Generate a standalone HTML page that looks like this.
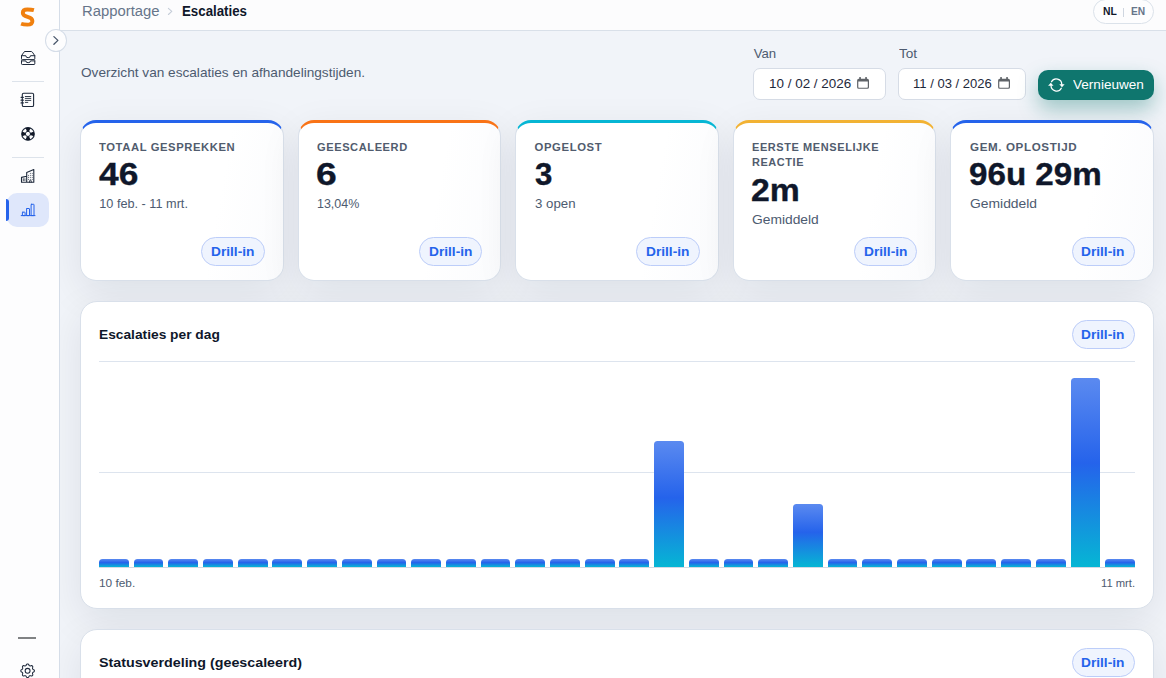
<!DOCTYPE html>
<html lang="nl">
<head>
<meta charset="utf-8">
<title>Escalaties</title>
<style>
*{box-sizing:border-box;margin:0;padding:0}
html,body{width:1166px;height:678px;overflow:hidden}
body{font-family:"Liberation Sans",sans-serif;color:#0f172a;background:#eef1f6;position:relative}
.t{position:absolute;white-space:nowrap;line-height:1;transform-origin:0 0;display:block}
#main{position:absolute;left:60px;top:31px;width:1106px;height:647px;background:#f1f4f9}
#side{position:absolute;left:0;top:0;width:60px;height:678px;background:#fdfdfe;border-right:1px solid #d5dde8}
.sep{position:absolute;left:12px;width:32px;height:1px;background:#dde3eb}
#active{position:absolute;left:7px;top:193px;width:42px;height:34px;border-radius:10px;background:#dfe7fb}
#activebar{position:absolute;left:6px;top:199px;width:3px;height:22px;border-radius:0 3px 3px 0;background:#2563eb}
#dash{position:absolute;left:18px;top:637px;width:18px;height:2px;background:#808284}
#toggle{position:absolute;left:45px;top:29px;width:22px;height:23px;border-radius:50%;background:#fdfdfe;border:1px solid #d5dde8}
#head{position:absolute;left:60px;top:0;width:1106px;height:31px;background:#fcfcfd;border-bottom:1px solid #d9e0e9}
#lang{position:absolute;left:1093px;top:-1px;width:61px;height:25px;border-radius:13px;border:1px solid #dbe2ea;background:#fdfdfe}
#langsep{position:absolute;left:1123px;top:8px;width:1px;height:9px;background:#cfd6e0}
.inp{position:absolute;top:68px;height:32px;border:1px solid #d6dce6;border-radius:7px;background:#fff}
#btn{position:absolute;left:1038px;top:70px;width:116px;height:30px;border-radius:10px;background:#0f766e;box-shadow:0 9px 20px rgba(15,118,110,.36)}
.card{position:absolute;top:120px;height:161px;width:203.6px;border-radius:16px;background:linear-gradient(100deg,#fff 0,#fff 66%,#fafbfd 100%);border:1px solid #d9e0ea;border-top:3px solid #2563eb;box-shadow:0 12px 40px rgba(15,23,42,.085)}
.pill{position:absolute;width:63.4px;height:29px;border-radius:15px;border:1px solid #bccdf9;background:#eff4fe}
.panel{position:absolute;left:80px;width:1074px;border-radius:17px;background:#fff;border:1px solid #d9e0ea;box-shadow:0 12px 40px rgba(15,23,42,.085)}
.grid{position:absolute;left:99px;width:1036px;height:1px;background:#dde4ee}
.bar{position:absolute;width:29.9px;border-radius:3.5px 3.5px 0 0;background:linear-gradient(180deg,#5b8af0 0%,#2563eb 45%,#06b6d4 100%)}
svg{position:absolute;left:0;top:0;overflow:visible}
</style>
</head>
<body>
<div id="main"></div>
<div id="head"></div>
<div id="lang"></div><div id="langsep"></div>
<div class="inp" style="left:753.3px;width:133px"></div>
<div class="inp" style="left:898.4px;width:127.2px"></div>
<div id="btn"></div>
<div class="card" style="left:80.0px;border-top-color:#2563eb"></div>
<div class="pill" style="left:201.3px;top:237px"></div>
<div class="card" style="left:297.6px;border-top-color:#f97316"></div>
<div class="pill" style="left:418.9px;top:237px"></div>
<div class="card" style="left:515.1px;border-top-color:#06b6d4"></div>
<div class="pill" style="left:636.4px;top:237px"></div>
<div class="card" style="left:732.7px;border-top-color:#f2b233"></div>
<div class="pill" style="left:854.0px;top:237px"></div>
<div class="card" style="left:950.2px;border-top-color:#2563eb"></div>
<div class="pill" style="left:1071.5px;top:237px"></div>
<div class="panel" style="top:301px;height:308px"></div>
<div class="panel" style="top:629px;height:120px"></div>
<div class="pill" style="left:1072px;top:319.9px;width:62.8px"></div>
<div class="pill" style="left:1072px;top:648.1px;width:62.8px"></div>
<div class="grid" style="top:361px"></div>
<div class="grid" style="top:472px"></div>
<div class="bar s" style="left:98.9px;top:558.9px;height:8.3px"></div>
<div class="bar s" style="left:133.6px;top:558.9px;height:8.3px"></div>
<div class="bar s" style="left:168.3px;top:558.9px;height:8.3px"></div>
<div class="bar s" style="left:203.0px;top:558.9px;height:8.3px"></div>
<div class="bar s" style="left:237.7px;top:558.9px;height:8.3px"></div>
<div class="bar s" style="left:272.4px;top:558.9px;height:8.3px"></div>
<div class="bar s" style="left:307.1px;top:558.9px;height:8.3px"></div>
<div class="bar s" style="left:341.8px;top:558.9px;height:8.3px"></div>
<div class="bar s" style="left:376.5px;top:558.9px;height:8.3px"></div>
<div class="bar s" style="left:411.2px;top:558.9px;height:8.3px"></div>
<div class="bar s" style="left:445.9px;top:558.9px;height:8.3px"></div>
<div class="bar s" style="left:480.6px;top:558.9px;height:8.3px"></div>
<div class="bar s" style="left:515.3px;top:558.9px;height:8.3px"></div>
<div class="bar s" style="left:550.0px;top:558.9px;height:8.3px"></div>
<div class="bar s" style="left:584.7px;top:558.9px;height:8.3px"></div>
<div class="bar s" style="left:619.4px;top:558.9px;height:8.3px"></div>
<div class="bar" style="left:654.1px;top:441.2px;height:126.0px"></div>
<div class="bar s" style="left:688.8px;top:558.9px;height:8.3px"></div>
<div class="bar s" style="left:723.5px;top:558.9px;height:8.3px"></div>
<div class="bar s" style="left:758.2px;top:558.9px;height:8.3px"></div>
<div class="bar" style="left:792.9px;top:504.2px;height:63.0px"></div>
<div class="bar s" style="left:827.6px;top:558.9px;height:8.3px"></div>
<div class="bar s" style="left:862.3px;top:558.9px;height:8.3px"></div>
<div class="bar s" style="left:897.0px;top:558.9px;height:8.3px"></div>
<div class="bar s" style="left:931.7px;top:558.9px;height:8.3px"></div>
<div class="bar s" style="left:966.4px;top:558.9px;height:8.3px"></div>
<div class="bar s" style="left:1001.1px;top:558.9px;height:8.3px"></div>
<div class="bar s" style="left:1035.8px;top:558.9px;height:8.3px"></div>
<div class="bar" style="left:1070.5px;top:378.2px;height:189.0px"></div>
<div class="bar s" style="left:1105.2px;top:558.9px;height:8.3px"></div>
<div class="grid" style="top:567px;background:#d3dae4"></div>
<div id="side"></div>
<div class="sep" style="top:81px"></div>
<div class="sep" style="top:157px"></div>
<div id="active"></div><div id="activebar"></div>
<div id="dash"></div>
<div id="toggle"></div>
<span class="t" style="left:81.9px;top:4px;font-size:14px;color:#66758a;transform:scaleX(1.060)">Rapportage</span>
<span class="t" style="left:181.5px;top:4px;font-size:14px;color:#0f172a;font-weight:700;transform:scaleX(0.949)">Escalaties</span>
<span class="t" style="left:1102.9px;top:7px;font-size:10.2px;color:#0f172a;font-weight:700;transform:scaleX(1.018)">NL</span>
<span class="t" style="left:1130.9px;top:7px;font-size:10.2px;color:#66758a;font-weight:700">EN</span>
<span class="t" style="left:80.8px;top:66px;font-size:13px;color:#4d5b70;transform:scaleX(1.048)">Overzicht van escalaties en afhandelingstijden.</span>
<span class="t" style="left:753.7px;top:47px;font-size:13.2px;color:#4d5b70">Van</span>
<span class="t" style="left:898.5px;top:47px;font-size:13.2px;color:#4d5b70;transform:scaleX(1.032)">Tot</span>
<span class="t" style="left:768.9px;top:77px;font-size:13.2px;color:#1e293b;transform:scaleX(1.020)">10 / 02 / 2026</span>
<span class="t" style="left:913.4px;top:77px;font-size:13.2px;color:#1e293b;transform:scaleX(0.988)">11 / 03 / 2026</span>
<span class="t" style="left:1072.8px;top:78px;font-size:13px;color:#ffffff;transform:scaleX(1.043)">Vernieuwen</span>
<span class="t" style="left:99.3px;top:142px;font-size:11.3px;color:#515c6e;font-weight:700;letter-spacing:0.6px;transform:scaleX(0.995)">TOTAAL GESPREKKEN</span>
<span class="t" style="left:99.3px;top:159px;font-size:31px;color:#0f172a;font-weight:700;transform:scaleX(1.139);-webkit-text-stroke:.35px #0f172a">46</span>
<span class="t" style="left:99.3px;top:198px;font-size:12.7px;color:#4d5b70">10 feb. - 11 mrt.</span>
<span class="t" style="left:211.1px;top:246px;font-size:12.4px;color:#2563eb;font-weight:700;transform:scaleX(1.107)">Drill-in</span>
<span class="t" style="left:316.9px;top:142px;font-size:11.3px;color:#515c6e;font-weight:700;letter-spacing:0.6px;transform:scaleX(0.980)">GEESCALEERD</span>
<span class="t" style="left:315.8px;top:159px;font-size:31px;color:#0f172a;font-weight:700;transform:scaleX(1.200);-webkit-text-stroke:.35px #0f172a">6</span>
<span class="t" style="left:316.9px;top:198px;font-size:12.7px;color:#4d5b70;transform:scaleX(0.982)">13,04%</span>
<span class="t" style="left:428.7px;top:246px;font-size:12.4px;color:#2563eb;font-weight:700;transform:scaleX(1.107)">Drill-in</span>
<span class="t" style="left:534.6px;top:142px;font-size:11.3px;color:#515c6e;font-weight:700;letter-spacing:0.6px">OPGELOST</span>
<span class="t" style="left:534.6px;top:159px;font-size:31px;color:#0f172a;font-weight:700;transform:scaleX(1.006);-webkit-text-stroke:.35px #0f172a">3</span>
<span class="t" style="left:534.6px;top:198px;font-size:12.7px;color:#4d5b70;transform:scaleX(1.045)">3 open</span>
<span class="t" style="left:646.2px;top:246px;font-size:12.4px;color:#2563eb;font-weight:700;transform:scaleX(1.107)">Drill-in</span>
<span class="t" style="left:752.2px;top:142px;font-size:11.3px;color:#515c6e;font-weight:700;letter-spacing:0.6px;transform:scaleX(0.973)">EERSTE MENSELIJKE</span>
<span class="t" style="left:752.2px;top:157px;font-size:11.3px;color:#515c6e;font-weight:700;letter-spacing:0.6px;transform:scaleX(0.969)">REACTIE</span>
<span class="t" style="left:751.2px;top:175px;font-size:31px;color:#0f172a;font-weight:700;transform:scaleX(1.089);-webkit-text-stroke:.35px #0f172a">2m</span>
<span class="t" style="left:752.2px;top:214px;font-size:12.7px;color:#4d5b70;transform:scaleX(1.088)">Gemiddeld</span>
<span class="t" style="left:863.8px;top:246px;font-size:12.4px;color:#2563eb;font-weight:700;transform:scaleX(1.107)">Drill-in</span>
<span class="t" style="left:969.9px;top:142px;font-size:11.3px;color:#515c6e;font-weight:700;letter-spacing:0.6px;transform:scaleX(1.027)">GEM. OPLOSTIJD</span>
<span class="t" style="left:968.8px;top:159px;font-size:31px;color:#0f172a;font-weight:700;transform:scaleX(1.070);-webkit-text-stroke:.35px #0f172a">96u 29m</span>
<span class="t" style="left:969.9px;top:198px;font-size:12.7px;color:#4d5b70;transform:scaleX(1.093)">Gemiddeld</span>
<span class="t" style="left:1081.3px;top:246px;font-size:12.4px;color:#2563eb;font-weight:700;transform:scaleX(1.107)">Drill-in</span>
<span class="t" style="left:99.3px;top:328px;font-size:13.2px;color:#0f172a;font-weight:700;transform:scaleX(1.043)">Escalaties per dag</span>
<span class="t" style="left:1081.3px;top:329px;font-size:12.4px;color:#2563eb;font-weight:700;transform:scaleX(1.107)">Drill-in</span>
<span class="t" style="left:99.3px;top:578px;font-size:11.5px;color:#4d5b70;transform:scaleX(1.029)">10 feb.</span>
<span class="t" style="left:1100.9px;top:578px;font-size:11.5px;color:#4d5b70;transform:scaleX(0.976)">11 mrt.</span>
<span class="t" style="left:99.4px;top:656px;font-size:13.2px;color:#0f172a;font-weight:700;transform:scaleX(1.082)">Statusverdeling (geescaleerd)</span>
<span class="t" style="left:1081.3px;top:657px;font-size:12.4px;color:#2563eb;font-weight:700;transform:scaleX(1.107)">Drill-in</span>
<svg width="1166" height="678" viewBox="0 0 1166 678" fill="none" stroke-linecap="round" stroke-linejoin="round">
<!-- logo S -->
<path d="M33.9 10.1 C31.8 9.5 29.6 9.5 27.4 9.5 C24.3 9.5 22.8 10.9 22.8 12.9 C22.8 15.2 24.8 16 27.6 16.8 C30.6 17.6 32.4 18.6 32.4 20.9 C32.4 23.3 30.4 24.6 27.4 24.6 C25.2 24.6 23.2 24.5 21.1 23.7" stroke="#f0800f" stroke-width="3.9" stroke-linecap="butt"/>
<!-- toggle chevron + breadcrumb chevron -->
<path d="M53.9 36.6 L57.9 40.4 L53.9 44.2" stroke="#475569" stroke-width="1.3"/>
<path d="M168.4 8.3 L171.8 11.4 L168.4 14.5" stroke="#c5cdd8" stroke-width="1.1"/>
<!-- tray stack -->
<g stroke="#1e293b" stroke-width="1.1">
<path d="M25.2 51.5 H31.1 Q31.9 51.5 32.4 52.2 L34.8 55.7 V58.8 Q34.8 59.6 34 59.6 H22.3 Q21.5 59.6 21.5 58.8 V55.7 L23.9 52.2 Q24.4 51.5 25.2 51.5 Z" stroke-width="1"/>
<path d="M21.5 55.7 H25.8 A2.35 2 0 0 0 30.5 55.7 H34.8" stroke-width="1"/>
<path d="M21.5 60.9 V63.8 Q21.5 64.5 22.3 64.5 H34 Q34.8 64.5 34.8 63.8 V60.9" stroke-width="1"/>
<path d="M21.5 60.9 H25.8 A2.35 1.8 0 0 0 30.5 60.9 H34.8" stroke-width="1"/>
<!-- notebook -->
<rect x="22.3" y="93.2" width="11.3" height="13.3" rx="1.3"/>
<path d="M21.1 97.3 H23.3 M21.1 100.2 H23.3 M21.1 102.9 H23.3" stroke-width="1.3"/>
<path d="M25.3 96.5 H30.8 M25.3 98.4 H30.8 M25.3 100.4 H30.8 M25.3 102.4 H27.8" stroke-width=".9"/>
<!-- business -->
<path d="M26.7 182.3 V172.4 L33.8 169.5 V182.3 M21.5 182.3 V177.4 L26.7 176.3 M21.5 182.3 H33.8"/>
<path d="M23.3 178.7 V180.6 M24.9 178.7 V180.6" stroke-width=".8"/>
<path d="M29.5 182.3 V180.7 H31.3 V182.3" stroke-width=".8"/>
</g>
<g fill="#1e293b" opacity=".85">
<rect x="28" y="174.9" width=".9" height=".9"/><rect x="29.9" y="174.9" width=".9" height=".9"/><rect x="31.8" y="174.9" width=".9" height=".9"/>
<rect x="28" y="176.9" width=".9" height=".9"/><rect x="29.9" y="176.9" width=".9" height=".9"/><rect x="31.8" y="176.9" width=".9" height=".9"/>
<rect x="28" y="178.9" width=".9" height=".9"/><rect x="29.9" y="178.9" width=".9" height=".9"/><rect x="31.8" y="178.9" width=".9" height=".9"/>
<rect x="29.9" y="172.9" width=".9" height=".9"/><rect x="31.8" y="172.9" width=".9" height=".9"/>
</g>
<circle cx="28.0" cy="133.9" r="6.3" stroke="#1e293b" stroke-width="1.1"/>
<circle cx="28.0" cy="133.9" r="2.6" stroke="#1e293b" stroke-width="1"/>
<path fill="#111827" stroke="none" d="M30.39 132.88 L33.80 131.44 A6.3 6.3 0 0 1 33.80 136.36 L30.39 134.92 A2.6 2.6 0 0 0 30.39 132.88 Z"/>
<path fill="#111827" stroke="none" d="M29.02 136.29 L30.46 139.70 A6.3 6.3 0 0 1 25.54 139.70 L26.98 136.29 A2.6 2.6 0 0 0 29.02 136.29 Z"/>
<path fill="#111827" stroke="none" d="M25.61 134.92 L22.20 136.36 A6.3 6.3 0 0 1 22.20 131.44 L25.61 132.88 A2.6 2.6 0 0 0 25.61 134.92 Z"/>
<path fill="#111827" stroke="none" d="M26.98 131.51 L25.54 128.10 A6.3 6.3 0 0 1 30.46 128.10 L29.02 131.51 A2.6 2.6 0 0 0 26.98 131.51 Z"/>
<path d="M27.60 664.00 L27.87 664.03 L28.13 664.12 L28.37 664.26 L28.60 664.47 L28.79 664.82 L28.95 665.17 L29.12 665.39 L29.30 665.57 L29.48 665.71 L29.67 665.81 L29.87 665.87 L30.10 665.90 L30.34 665.90 L30.63 665.86 L30.99 665.73 L31.37 665.62 L31.68 665.63 L31.95 665.70 L32.20 665.82 L32.41 665.99 L32.58 666.20 L32.70 666.45 L32.77 666.72 L32.78 667.03 L32.67 667.41 L32.54 667.77 L32.50 668.06 L32.50 668.30 L32.53 668.53 L32.59 668.73 L32.69 668.92 L32.83 669.10 L33.01 669.28 L33.23 669.45 L33.58 669.61 L33.93 669.80 L34.14 670.03 L34.28 670.27 L34.37 670.53 L34.40 670.80 L34.37 671.07 L34.28 671.33 L34.14 671.57 L33.93 671.80 L33.58 671.99 L33.23 672.15 L33.01 672.32 L32.83 672.50 L32.69 672.68 L32.59 672.87 L32.53 673.07 L32.50 673.30 L32.50 673.54 L32.54 673.83 L32.67 674.19 L32.78 674.57 L32.77 674.88 L32.70 675.15 L32.58 675.40 L32.41 675.61 L32.20 675.78 L31.95 675.90 L31.68 675.97 L31.37 675.98 L30.99 675.87 L30.63 675.74 L30.34 675.70 L30.10 675.70 L29.87 675.73 L29.67 675.79 L29.48 675.89 L29.30 676.03 L29.12 676.21 L28.95 676.43 L28.79 676.78 L28.60 677.13 L28.37 677.34 L28.13 677.48 L27.87 677.57 L27.60 677.60 L27.33 677.57 L27.07 677.48 L26.83 677.34 L26.60 677.13 L26.41 676.78 L26.25 676.43 L26.08 676.21 L25.90 676.03 L25.72 675.89 L25.53 675.79 L25.33 675.73 L25.10 675.70 L24.86 675.70 L24.57 675.74 L24.21 675.87 L23.83 675.98 L23.52 675.97 L23.25 675.90 L23.00 675.78 L22.79 675.61 L22.62 675.40 L22.50 675.15 L22.43 674.88 L22.42 674.57 L22.53 674.19 L22.66 673.83 L22.70 673.54 L22.70 673.30 L22.67 673.07 L22.61 672.87 L22.51 672.68 L22.37 672.50 L22.19 672.32 L21.97 672.15 L21.62 671.99 L21.27 671.80 L21.06 671.57 L20.92 671.33 L20.83 671.07 L20.80 670.80 L20.83 670.53 L20.92 670.27 L21.06 670.03 L21.27 669.80 L21.62 669.61 L21.97 669.45 L22.19 669.28 L22.37 669.10 L22.51 668.92 L22.61 668.73 L22.67 668.53 L22.70 668.30 L22.70 668.06 L22.66 667.77 L22.53 667.41 L22.42 667.03 L22.43 666.72 L22.50 666.45 L22.62 666.20 L22.79 665.99 L23.00 665.82 L23.25 665.70 L23.52 665.63 L23.83 665.62 L24.21 665.73 L24.57 665.86 L24.86 665.90 L25.10 665.90 L25.33 665.87 L25.53 665.81 L25.72 665.71 L25.90 665.57 L26.08 665.39 L26.25 665.17 L26.41 664.82 L26.60 664.47 L26.83 664.26 L27.07 664.12 L27.33 664.03 Z" stroke="#1e293b" stroke-width="1.05"/>
<circle cx="27.6" cy="670.8" r="2.45" stroke="#1e293b" stroke-width="1.05"/>
<!-- bar chart active -->
<g stroke="#2563eb" stroke-width="1">
<path d="M21.2 215.6 H35"/>
<rect x="22.4" y="212.2" width="2.7" height="3.4" rx=".4"/>
<rect x="26.6" y="208.5" width="2.9" height="7.1" rx=".4"/>
<rect x="31.1" y="204.3" width="2.9" height="11.3" rx=".4"/>
</g>
<!-- calendar icons -->
<g fill="#5f6368" stroke="none">
<path fill-rule="evenodd" d="M858.7 78.8 h8.7 a1.6 1.6 0 0 1 1.6 1.6 v6.8 a1.6 1.6 0 0 1 -1.6 1.6 h-8.7 a1.6 1.6 0 0 1 -1.6 -1.6 v-6.8 a1.6 1.6 0 0 1 1.6 -1.6 z M858.3 81.4 v5.7 a.6 .6 0 0 0 .6 .6 h8.3 a.6 .6 0 0 0 .6 -.6 v-5.7 z"/>
<rect x="859.2" y="77.1" width="1.7" height="2.2"/><rect x="865.2" y="77.1" width="1.7" height="2.2"/>
<path fill-rule="evenodd" d="M999.7 78.8 h8.7 a1.6 1.6 0 0 1 1.6 1.6 v6.8 a1.6 1.6 0 0 1 -1.6 1.6 h-8.7 a1.6 1.6 0 0 1 -1.6 -1.6 v-6.8 a1.6 1.6 0 0 1 1.6 -1.6 z M999.3 81.4 v5.7 a.6 .6 0 0 0 .6 .6 h8.3 a.6 .6 0 0 0 .6 -.6 v-5.7 z"/>
<rect x="1000.2" y="77.1" width="1.7" height="2.2"/><rect x="1006.2" y="77.1" width="1.7" height="2.2"/>
</g>
<!-- refresh icon -->
<g stroke="#fff" stroke-width="1.25">
<path d="M1051.5 81.8 A5.5 5.5 0 0 1 1061.8 84.4"/>
<path d="M1061.3 88.2 A5.5 5.5 0 0 1 1051 85.6"/>
</g>
<g fill="#fff" stroke="none">
<path d="M1059.3 84.2 H1064.6 L1062 87.2 Z"/>
<path d="M1048.1 85.8 H1053.5 L1050.8 82.8 Z"/>
</g>
</svg>
</body>
</html>
